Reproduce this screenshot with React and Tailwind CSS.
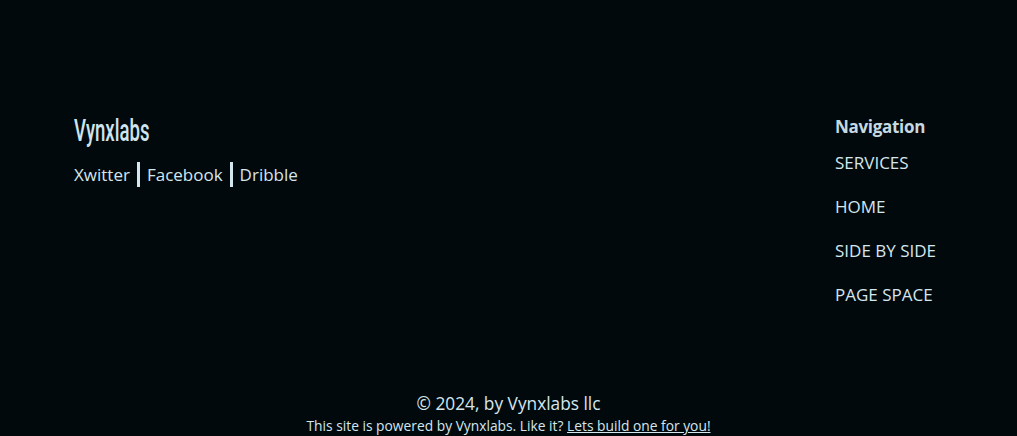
import React from 'react'

const navLinks = ['SERVICES', 'HOME', 'SIDE BY SIDE', 'PAGE SPACE']
const socials = ['Xwitter', 'Facebook', 'Dribble']

export default function App() {
  return (
    <div className="min-h-screen bg-[#02090c] text-[#d4e6ee] font-['Open_Sans',sans-serif] flex flex-col">
      <footer className="flex justify-between pl-[74px] pr-[80px] pt-[115px]">
        <div>
          <h2 className="h-[32px] font-['Roboto',sans-serif] font-medium text-[31px] leading-[32px] text-[#cfe4ee]">
            <span className="inline-block origin-left scale-x-[0.6]">Vynxlabs</span>
          </h2>
          <div className="flex items-center mt-[15px] text-[17px] leading-[24px]">
            {socials.map((s, i) => (
              <React.Fragment key={s}>
                {i > 0 && <span className="inline-block w-[3px] h-[25px] bg-[#d4e6ee] mx-[7px]" />}
                <a href="#">{s}</a>
              </React.Fragment>
            ))}
          </div>
        </div>
        <div className="w-[102px]">
          <h3 className="text-[17px] leading-[24px] font-bold text-[#c5d9e2] tracking-[-0.3px]">Navigation</h3>
          <ul className="mt-[12px] flex flex-col gap-[20px]">
            {navLinks.map(l => (
              <li key={l} className="text-[17px] leading-[24px] whitespace-nowrap">
                <a href="#">{l}</a>
              </li>
            ))}
          </ul>
        </div>
      </footer>
      <div className="mt-auto text-center">
        <p className="text-[17.3px] leading-[24px]">© 2024, by Vynxlabs llc</p>
        <p className="text-[13.8px] leading-[20px]">
          This site is powered by Vynxlabs. Like it? <a href="#" className="underline">Lets build one for you!</a>
        </p>
      </div>
    </div>
  )
}
